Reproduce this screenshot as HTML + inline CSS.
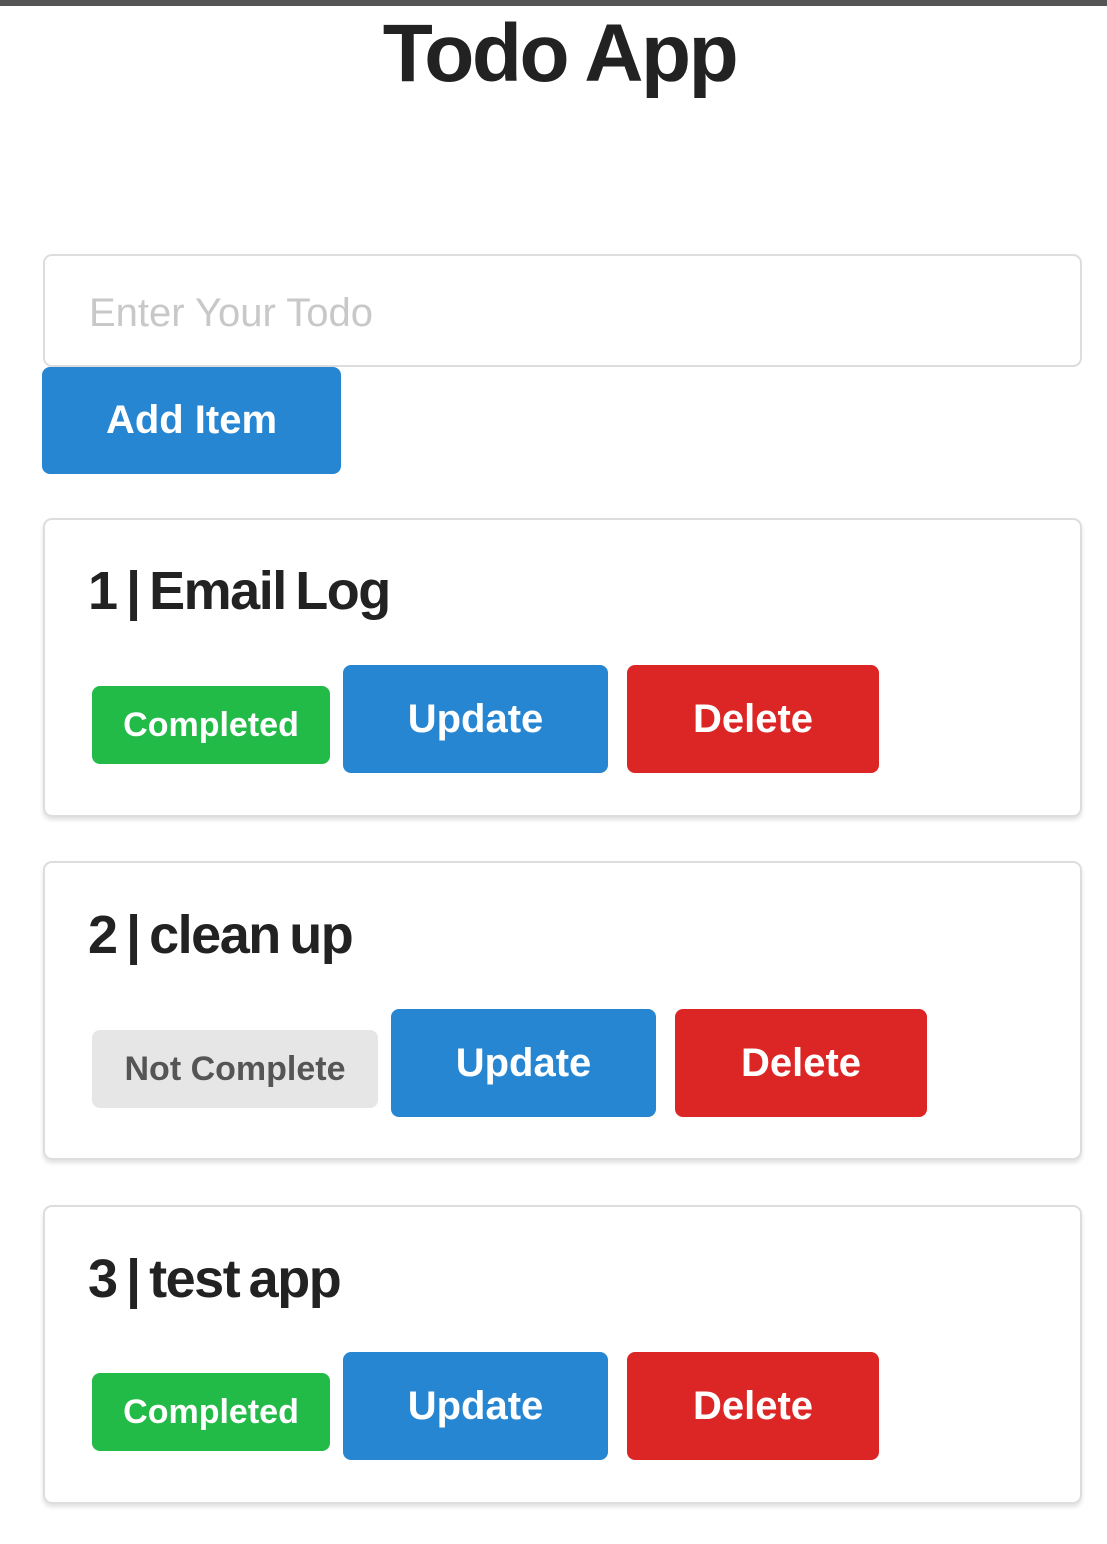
<!DOCTYPE html>
<html><head><meta charset="utf-8"><style>
*{box-sizing:border-box;margin:0;padding:0}
body{width:1107px;height:1544px;background:#fff;position:relative;overflow:hidden;font-family:"Liberation Sans",sans-serif;color:#222}
.a{position:absolute}
.bar{left:0;top:0;width:1107px;height:6px;background:#555}
h1{position:absolute;left:6px;width:1107px;top:6px;text-align:center;font-size:82px;font-weight:bold;letter-spacing:-2.5px;line-height:96px;color:#222}
.inp{left:43px;top:254px;width:1039px;height:113px;border:2px solid #ddd;border-radius:9px;font-size:40px;color:#c8c8c8;padding:35px 0 0 44px;line-height:44px}
.btn{display:flex;align-items:center;justify-content:center;color:#fff;font-weight:bold;border-radius:8px}
.blue{background:#2686d2}.red{background:#dc2626}.green{background:#22bb48}.gray{background:#e6e6e6;color:#555!important}
.card{left:43px;width:1039px;height:299px;border:2px solid #ddd;border-radius:9px;box-shadow:0 3px 4px rgba(0,0,0,.12)}
.t{font-size:54px;font-weight:bold;line-height:60px;left:88px;letter-spacing:-1.5px;word-spacing:-4px}
.badge{font-size:34px;height:78px;font-weight:bold}
.big{font-size:40px;height:108px}
</style></head><body>
<div class="a bar"></div>
<h1>Todo App</h1>
<div class="a inp">Enter Your Todo</div>
<div class="a btn blue" style="left:42px;top:367px;width:299px;height:107px;font-size:40px">Add Item</div>

<div class="a card" style="top:518px"></div>
<div class="a t" style="top:561px">1 | Email Log</div>
<div class="a btn green badge" style="left:92px;top:686px;width:238px">Completed</div>
<div class="a btn blue big" style="left:343px;top:665px;width:265px">Update</div>
<div class="a btn red big" style="left:627px;top:665px;width:252px">Delete</div>

<div class="a card" style="top:861px"></div>
<div class="a t" style="top:905px">2 | clean up</div>
<div class="a btn gray badge" style="left:92px;top:1030px;width:286px">Not Complete</div>
<div class="a btn blue big" style="left:391px;top:1009px;width:265px">Update</div>
<div class="a btn red big" style="left:675px;top:1009px;width:252px">Delete</div>

<div class="a card" style="top:1205px"></div>
<div class="a t" style="top:1249px">3 | test app</div>
<div class="a btn green badge" style="left:92px;top:1373px;width:238px">Completed</div>
<div class="a btn blue big" style="left:343px;top:1352px;width:265px">Update</div>
<div class="a btn red big" style="left:627px;top:1352px;width:252px">Delete</div>
</body></html>
